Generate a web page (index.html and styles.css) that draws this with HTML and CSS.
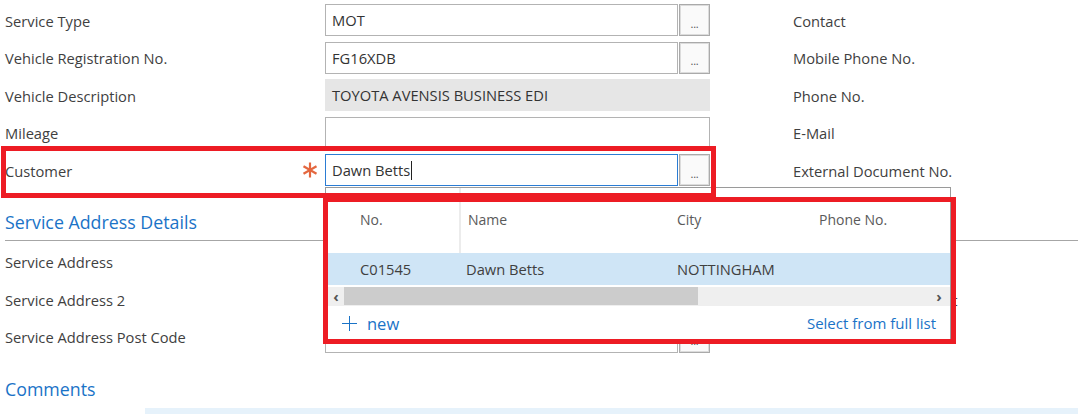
FILE: index.html
```html
<!DOCTYPE html>
<html lang="en">
<head>
<meta charset="utf-8">
<title>Service Order</title>
<link rel="stylesheet" href="styles.css">
</head>
<body>
<div class="page">
  <section class="form general">
    <div class="row">
      <div class="label">Service Type</div>
      <div class="field"><div class="input">MOT</div><div class="lookup">...</div></div>
      <div class="gap"></div>
      <div class="rlabel">Contact</div>
    </div>
    <div class="row">
      <div class="label">Vehicle Registration No.</div>
      <div class="field"><div class="input">FG16XDB</div><div class="lookup">...</div></div>
      <div class="gap"></div>
      <div class="rlabel">Mobile Phone No.</div>
    </div>
    <div class="row">
      <div class="label">Vehicle Description</div>
      <div class="field"><div class="input readonly">TOYOTA AVENSIS BUSINESS EDI</div></div>
      <div class="gap"></div>
      <div class="rlabel">Phone No.</div>
    </div>
    <div class="row">
      <div class="label">Mileage</div>
      <div class="field"><div class="input"></div></div>
      <div class="gap"></div>
      <div class="rlabel">E-Mail</div>
    </div>
    <div class="row customer-row">
      <div class="label">Customer
        <svg class="required" width="16" height="16" viewBox="0 0 16 16" aria-hidden="true">
          <g stroke="#e4673f" stroke-width="2.2" stroke-linecap="butt">
            <line x1="8" y1="0.5" x2="8" y2="15.5"/>
            <line x1="1.5" y1="4.2" x2="14.5" y2="11.8"/>
            <line x1="1.5" y1="11.8" x2="14.5" y2="4.2"/>
          </g>
        </svg>
      </div>
      <div class="field active">
        <div class="input focused">Dawn Betts<span class="caret"></span></div><div class="lookup">...</div>
        <div class="popup">
          <div class="popup-head">
            <div class="cell c1">No.</div>
            <div class="cell c2">Name</div>
            <div class="cell c3">City</div>
            <div class="cell c4">Phone No.</div>
          </div>
          <div class="popup-row">
            <div class="cell c1">C01545</div>
            <div class="cell c2">Dawn Betts</div>
            <div class="cell c3">NOTTINGHAM</div>
            <div class="cell c4"></div>
          </div>
          <div class="hscroll">
            <span class="arrow">&#8249;</span>
            <div class="track"><div class="thumb"></div></div>
            <span class="arrow">&#8250;</span>
          </div>
          <div class="popup-foot">
            <a class="new"><span class="plus"></span>new</a>
            <a class="full">Select from full list</a>
          </div>
        </div>
      </div>
      <div class="gap"></div>
      <div class="rlabel">External Document No.</div>
      <div class="mark mark-field"></div>
      <div class="mark mark-popup"></div>
    </div>
  </section>

  <h2 class="section-title">Service Address Details</h2>

  <section class="form address">
    <div class="row">
      <div class="label">Service Address</div>
      <div class="field"><div class="input"></div></div>
      <div class="gap"></div>
      <div class="rlabel">Service Address City</div>
    </div>
    <div class="row">
      <div class="label">Service Address 2</div>
      <div class="field"><div class="input"></div></div>
      <div class="gap"></div>
      <div class="rlabel">Service Address Contact</div>
    </div>
    <div class="row">
      <div class="label">Service Address Post Code</div>
      <div class="field"><div class="input"></div><div class="lookup">...</div></div>
      <div class="gap"></div>
      <div class="rlabel"></div>
    </div>
  </section>

  <h2 class="section-title comments">Comments</h2>
  <div class="comment-box"></div>
</div>
</body>
</html>
```

FILE: styles.css
```css
html, body {
  margin: 0;
  padding: 0;
  background: #ffffff;
  overflow: hidden;
}

.page {
  width: 1078px;
  height: 414px;
  padding: 4px 0 0 5px;
  box-sizing: border-box;
  font-family: "Open Sans", "Noto Sans", sans-serif;
  font-size: 14.7px;
  color: #3f3f3f;
  overflow: hidden;
}

.form {
  display: flex;
  flex-direction: column;
  gap: 5.5px;
}

.row {
  display: grid;
  grid-template-columns: 320px 385px 83px 1fr;
  height: 32px;
  align-items: center;
}

.label {
  display: flex;
  align-items: center;
  justify-content: space-between;
  padding-right: 7px;
  height: 32px;
  padding-top: 1px;
  box-sizing: border-box;
  white-space: nowrap;
}

.address .label {
  padding-top: 0;
}

.required {
  display: block;
  margin-top: -1px;
}

.rlabel {
  white-space: nowrap;
  padding-top: 1px;
}

.field {
  display: flex;
  gap: 1px;
  height: 32px;
}

.input {
  flex: 1;
  box-sizing: border-box;
  height: 32px;
  border: 1px solid #b3b3b3;
  padding: 0 6px;
  display: flex;
  align-items: center;
  color: #333;
  background: #fff;
}

.input.readonly {
  background: #e6e6e6;
  border-color: #e6e6e6;
}

.input.focused {
  border-color: #2b7cd3;
}

.caret {
  display: inline-block;
  width: 1px;
  height: 19px;
  background: #222;
  margin-left: 1px;
}

.lookup {
  width: 31px;
  box-sizing: border-box;
  height: 32px;
  border: 1px solid #aaaaaa;
  box-shadow: inset 0 0 0 1px #dcdcdc;
  background: #fafafa;
  display: flex;
  align-items: center;
  justify-content: center;
  padding-top: 6px;
  font-size: 11px;
  letter-spacing: -0.3px;
  color: #555;
}

/* customer lookup popup */
.customer-row {
  position: relative;
}

.field.active {
  position: relative;
}

.popup {
  position: absolute;
  left: 0;
  top: 33px;
  width: 626px;
  height: 156px;
  box-sizing: border-box;
  border: 1px solid #9a9a9a;
  background: #fff;
  z-index: 5;
  display: flex;
  flex-direction: column;
  padding-left: 2px;
  font-size: 14.7px;
}

.popup-head,
.popup-row {
  display: grid;
  grid-template-columns: 131px 211px 142px 1fr;
}

.popup-head {
  height: 65px;
  color: #5a5a5a;
  font-size: 14px;
}

.popup-head .cell {
  padding-top: 22px;
}

.popup-head .c2 {
  border-left: 2px solid #ececec;
}

.cell {
  padding-left: 7px;
  white-space: nowrap;
}

.popup-head .c1,
.popup-row .c1 {
  padding-left: 32px;
}

.popup-row {
  height: 32px;
  background: #cfe5f6;
  align-items: center;
  color: #3f3f3f;
}

.hscroll {
  margin-top: 2px;
  height: 19px;
  background: #efefef;
  display: flex;
  align-items: center;
  padding-right: 3px;
}

.arrow {
  width: 16px;
  text-align: center;
  font-size: 15px;
  line-height: 19px;
  color: #555;
  font-weight: 700;
}

.track {
  flex: 1;
  height: 19px;
}

.thumb {
  width: 354px;
  height: 18px;
  background: #cccccc;
}

.popup-foot {
  flex: 1;
  display: flex;
  justify-content: space-between;
  align-items: center;
  padding: 0 14px 2px 14px;
  color: #1a73c7;
}

.new {
  display: flex;
  align-items: center;
  font-size: 16.5px;
}

.plus {
  position: relative;
  width: 15px;
  height: 15px;
  margin-right: 10px;
}

.plus::before,
.plus::after {
  content: "";
  position: absolute;
  background: #1a73c7;
}

.plus::before {
  left: 7px;
  top: 0;
  width: 1.4px;
  height: 15px;
}

.plus::after {
  top: 7px;
  left: 0;
  height: 1.4px;
  width: 15px;
}

.full {
  font-size: 15px;
}

/* annotation boxes */
.mark {
  position: absolute;
  box-sizing: border-box;
  border: 5px solid #ed1c24;
  z-index: 10;
  pointer-events: none;
}

.mark-field {
  left: -4px;
  top: -8px;
  width: 715px;
  height: 52px;
}

.mark-popup {
  left: 318px;
  top: 43px;
  width: 633px;
  height: 147px;
}

/* sections */
.section-title {
  margin: 14px 0 0 0;
  padding: 8px 0 4px 0;
  line-height: 28px;
  font-size: 17.8px;
  font-weight: 400;
  color: #1a73c7;
  border-bottom: 1px solid #a6a6a6;
}

.address {
  margin-top: 5px;
}

.section-title.comments {
  margin-top: 22px;
  padding: 0;
  border-bottom: none;
}

.comment-box {
  margin: 5px 0 0 140px;
  height: 40px;
  background: #e6f2fb;
}
```
